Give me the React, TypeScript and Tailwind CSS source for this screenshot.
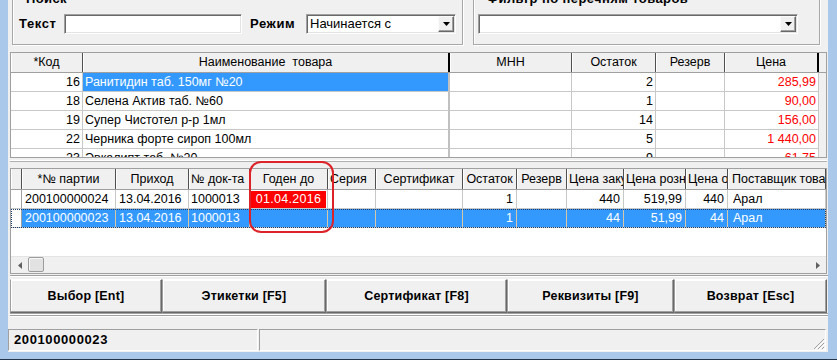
import React from "react";

const font = "font-['Liberation_Sans',Arial,sans-serif]";

function DropBtn() {
  return (
    <div className="w-[16px] h-[16px] bg-[#f0f0f0] border border-t-[#fafafa] border-l-[#fafafa] border-b-[#696969] border-r-[#696969] shadow-[inset_-1px_-1px_0_#a0a0a0] flex items-center justify-center">
      <svg width="7" height="4" viewBox="0 0 7 4">
        <path d="M0 0h7L3.5 4z" fill="#000" />
      </svg>
    </div>
  );
}

const sunken =
  "bg-white border border-t-[#a0a0a0] border-l-[#a0a0a0] border-b-white border-r-white shadow-[inset_1px_1px_0_#696969,inset_-1px_-1px_0_#e3e3e3]";

type UCol = { w: string; label: string; hb: string; cb: string };
const upCols: UCol[] = [
  { w: "w-[72px]", label: "*Код", hb: "border-r border-r-[#505050]", cb: "border-r border-r-[#c8c8c8]" },
  { w: "w-[367px]", label: "Наименование  товара", hb: "border-r-2 border-r-black", cb: "border-r-2 border-r-[#c0c0c0]" },
  { w: "w-[122px]", label: "МНН", hb: "border-r border-r-[#505050]", cb: "border-r border-r-[#c8c8c8]" },
  { w: "w-[84px]", label: "Остаток", hb: "border-r border-r-[#505050]", cb: "border-r border-r-[#c8c8c8]" },
  { w: "w-[69px]", label: "Резерв", hb: "border-r border-r-[#505050]", cb: "border-r border-r-[#c8c8c8]" },
  { w: "w-[94px]", label: "Цена", hb: "border-r-2 border-r-black", cb: "border-r border-r-[#c8c8c8]" },
];

const upRows = [
  { k: "16", n: "Ранитидин таб. 150мг №20", q: "2", p: "285,99", sel: true },
  { k: "18", n: "Селена Актив таб. №60", q: "1", p: "90,00" },
  { k: "19", n: "Супер Чистотел р-р 1мл", q: "14", p: "156,00" },
  { k: "22", n: "Черника форте сироп 100мл", q: "5", p: "1 440,00" },
  { k: "23", n: "Эвкалипт таб. №20", q: "9", p: "61,75" },
];

type LCol = { w: string; label: string; h: string; c: string };
const loCols: LCol[] = [
  { w: "w-[11px]", label: "", h: "justify-center", c: "" },
  { w: "w-[94px]", label: "*№ партии", h: "justify-center", c: "justify-start pl-[3px]" },
  { w: "w-[73px]", label: "Приход", h: "justify-center", c: "justify-start pl-[3px]" },
  { w: "w-[61px]", label: "№ док-та", h: "justify-start pl-[2px]", c: "justify-start pl-[2px]" },
  { w: "w-[78px]", label: "Годен до", h: "justify-center", c: "justify-center" },
  { w: "w-[48px]", label: "Серия", h: "justify-start pl-[2px]", c: "justify-start" },
  { w: "w-[87px]", label: "Сертификат", h: "justify-center", c: "justify-start" },
  { w: "w-[54px]", label: "Остаток", h: "justify-center", c: "justify-end pr-[3px]" },
  { w: "w-[50px]", label: "Резерв", h: "justify-center", c: "justify-end pr-[3px]" },
  { w: "w-[57px]", label: "Цена закупки", h: "justify-start pl-[2px]", c: "justify-end pr-[3px]" },
  { w: "w-[62px]", label: "Цена розн.", h: "justify-start pl-[2px]", c: "justify-end pr-[3px]" },
  { w: "w-[42px]", label: "Цена опт", h: "justify-start pl-[2px]", c: "justify-end pr-[3px]" },
  { w: "w-[98px]", label: "Поставщик товара", h: "justify-start pl-[4px]", c: "justify-start pl-[5px]" },
];

const loRows = [
  { sel: false, cells: ["", "200100000024", "13.04.2016", "1000013", "01.04.2016", "", "", "1", "", "440", "519,99", "440", "Арал"] },
  { sel: true, cells: ["", "200100000023", "13.04.2016", "1000013", "", "", "", "1", "", "44", "51,99", "44", "Арал"] },
];

const buttons = [
  { w: "w-[152px]", t: "Выбор [Ent]" },
  { w: "w-[164px]", t: "Этикетки [F5]" },
  { w: "w-[181px]", t: "Сертификат [F8]" },
  { w: "w-[167px]", t: "Реквизиты [F9]" },
  { w: "w-[153px]", t: "Возврат [Esc]" },
];

function GroupBox({ w, title, children }: { w: string; title: string; children: React.ReactNode }) {
  return (
    <div className={`relative mt-[-2px] h-[47px] ${w} border border-[#a8a8a8] shadow-[inset_1px_1px_0_#fff,1px_1px_0_#fff] flex items-start pt-[15px]`}>
      <span className="absolute left-[12px] top-[-8px] px-[1px] bg-[#f0f0f0] text-[13px] font-bold leading-[16px] tracking-[0.4px]">{title}</span>
      {children}
    </div>
  );
}

export default function App() {
  return (
    <div className={`relative w-[837px] h-[360px] overflow-hidden bg-[#aac8ea] border-b border-b-[#24344a] pl-[8px] text-black ${font}`}>
      <div className="w-[820px] h-[352px] bg-[#f0f0f0] flex flex-col">
        {/* top search area */}
        <div className="h-[52px] shrink-0 overflow-hidden flex pl-[4px] gap-[10px]">
          <GroupBox w="w-[451px]" title="Поиск">
            <div className="pl-[6px] w-[51px] text-[13px] font-bold leading-[20px] tracking-[0.6px]">Текст</div>
            <div className={`w-[178px] h-[20px] ${sunken}`} />
            <div className="ml-[8px] w-[56px] text-[13px] font-bold leading-[20px] tracking-[0.6px]">Режим</div>
            <div className={`w-[150px] h-[20px] ${sunken} flex items-center pr-[1px]`}>
              <span className="flex-1 pl-[3px] text-[13px] leading-[18px]">Начинается с</span>
              <DropBtn />
            </div>
          </GroupBox>
          <GroupBox w="w-[347px]" title="Фильтр по перечням товаров">
            <div className={`ml-[4px] w-[320px] h-[20px] ${sunken} flex items-center justify-end pr-[1px]`}>
              <DropBtn />
            </div>
          </GroupBox>
        </div>

        {/* upper grid */}
        <div className="ml-[2px] w-[817px] h-[106px] shrink-0 overflow-hidden border border-[#a0a0a0] bg-white text-[12.5px]">
          <div className="flex h-[20px] bg-[#f0f0f0] border-b border-b-[#a0a0a0]">
            {upCols.map((c, i) => (
              <div key={i} className={`${c.w} ${c.hb} shrink-0 flex items-center justify-center whitespace-pre leading-[19px] shadow-[inset_1px_0_0_#fff]`}>
                {c.label}
              </div>
            ))}
            <div className="flex-1 bg-[#f0f0f0]" />
          </div>
          {upRows.map((r, i) => (
            <div key={i} className="flex h-[19px]">
              <div className={`${upCols[0].w} ${upCols[0].cb} shrink-0 border-b border-b-[#c8c8c8] flex items-center justify-end pr-[2px]`}>{r.k}</div>
              <div className={`${upCols[1].w} ${upCols[1].cb} shrink-0 border-b border-b-[#c8c8c8] flex items-center pl-[2px] whitespace-nowrap ${r.sel ? "bg-[#3399ff] text-white" : ""}`}>{r.n}</div>
              <div className={`${upCols[2].w} ${upCols[2].cb} shrink-0 border-b border-b-[#c8c8c8]`} />
              <div className={`${upCols[3].w} ${upCols[3].cb} shrink-0 border-b border-b-[#c8c8c8] flex items-center justify-end pr-[2px]`}>{r.q}</div>
              <div className={`${upCols[4].w} ${upCols[4].cb} shrink-0 border-b border-b-[#c8c8c8]`} />
              <div className={`${upCols[5].w} ${upCols[5].cb} shrink-0 border-b border-b-[#c8c8c8] flex items-center justify-end pr-[2px] text-[#ff0000]`}>{r.p}</div>
              <div className="flex-1 bg-[#f0f0f0]" />
            </div>
          ))}
        </div>

        {/* splitter */}
        <div className="h-[10px] shrink-0 flex flex-col pt-[2px]">
          <div className="h-[1px] ml-[2px] w-[817px] bg-white" />
          <div className="h-[1px] ml-[2px] w-[817px] bg-[#b0b0b0]" />
        </div>

        {/* lower grid */}
        <div className="ml-[2px] w-[817px] h-[106px] shrink-0 overflow-hidden border border-[#a0a0a0] bg-white text-[12.5px] flex flex-col">
          <div className="flex h-[21px] shrink-0 bg-[#f0f0f0] border-b border-b-[#a0a0a0]">
            {loCols.map((c, i) => (
              <div key={i} className={`${c.w} ${c.h} shrink-0 flex items-center overflow-hidden whitespace-nowrap border-r border-r-[#505050] shadow-[inset_1px_0_0_#fff] leading-[20px]`}>
                {c.label}
              </div>
            ))}
          </div>
          {loRows.map((r, ri) => (
            <div key={ri} className={`flex h-[19px] shrink-0 ${r.sel ? "outline outline-1 outline-dotted outline-[#1d3d6b] -outline-offset-1" : ""}`}>
              {r.cells.map((v, ci) => {
                const c = loCols[ci];
                const isRed = !r.sel && ci === 4;
                const bg = ci === 0 ? "bg-white" : r.sel ? "bg-[#3399ff] text-white border-r-[#d8c6a8]" : "border-r-[#c8c8c8]";
                return (
                  <div key={ci} className={`${c.w} ${c.c} ${bg} shrink-0 flex items-center overflow-hidden whitespace-nowrap border-r border-b border-b-[#c8c8c8] ${ci === 0 ? "border-r-[#a0a0a0]" : ""}`}>
                    {isRed ? (
                      <div className="w-[75px] h-[17px] bg-[#ff0000] text-white flex items-center justify-center tracking-[0.3px]">{v}</div>
                    ) : (
                      v
                    )}
                  </div>
                );
              })}
            </div>
          ))}
          <div className="h-[28px] shrink-0 bg-white" />
          <div className="h-[17px] shrink-0 flex bg-[#f0f0f0] border-t border-t-[#e4e4e4]">
            <div className="w-[17px] flex items-center justify-center">
              <svg width="4" height="7" viewBox="0 0 4 7">
                <path d="M4 0v7L0 3.5z" fill="#606060" />
              </svg>
            </div>
            <div className="w-[16px] h-[15px] bg-[#e2e2e2] border border-[#9c9c9c] rounded-[2px] shadow-[inset_1px_1px_0_#f8f8f8]" />
            <div className="flex-1" />
            <div className="w-[17px] flex items-center justify-center">
              <svg width="4" height="7" viewBox="0 0 4 7">
                <path d="M0 0v7L4 3.5z" fill="#606060" />
              </svg>
            </div>
          </div>
        </div>

        {/* buttons panel */}
        <div className="shrink-0 pt-[1px] ml-[2px] w-[818px]">
          <div className="h-[1px] bg-[#a0a0a0]" />
          <div className="h-[1px] bg-white" />
          <div className="h-[2px]" />
          <div className="flex h-[34px]">
            {buttons.map((b, i) => (
              <div key={i} className={`${b.w} h-[34px] shrink-0 bg-[#f0f0f0] border border-t-white border-l-[#a0a0a0] border-b-[#696969] border-r-[#696969] shadow-[inset_-1px_-1px_0_#a0a0a0,inset_1px_1px_0_#fff] flex items-center justify-center text-[12.5px] font-bold tracking-[0.2px]`}>
                {b.t}
              </div>
            ))}
          </div>
          <div className="h-[1px] bg-[#a0a0a0]" />
          <div className="h-[1px] bg-white" />
          <div className="h-[1px] bg-[#a0a0a0]" />
          <div className="h-[1px] bg-white" />
        </div>

        <div className="h-[12px] shrink-0" />

        {/* status bar */}
        <div className="h-[23px] shrink-0 flex gap-[1px] pr-[2px]">
          <div className="w-[250px] h-[22px] border border-t-[#a0a0a0] border-l-[#a0a0a0] border-b-white border-r-white flex items-center pl-[5px] text-[13px] font-bold tracking-[0.6px]">
            200100000023
          </div>
          <div className="relative flex-1 h-[22px] border border-t-[#a0a0a0] border-l-[#a0a0a0] border-b-white border-r-white">
            <svg className="absolute right-[0px] bottom-[0px]" width="12" height="12" viewBox="0 0 12 12">
              <path d="M11 1L1 11M11 5L5 11M11 9L9 11" stroke="#a0a0a0" strokeWidth="1" />
              <path d="M12 2L2 12M12 6L6 12M12 10L10 12" stroke="#ffffff" strokeWidth="1" />
            </svg>
          </div>
        </div>
      </div>

      {/* red annotation */}
      <div className="absolute left-[249px] top-[161px] w-[85px] h-[72px] border-2 border-[#dd2228] rounded-[12px] pointer-events-none" />
    </div>
  );
}
